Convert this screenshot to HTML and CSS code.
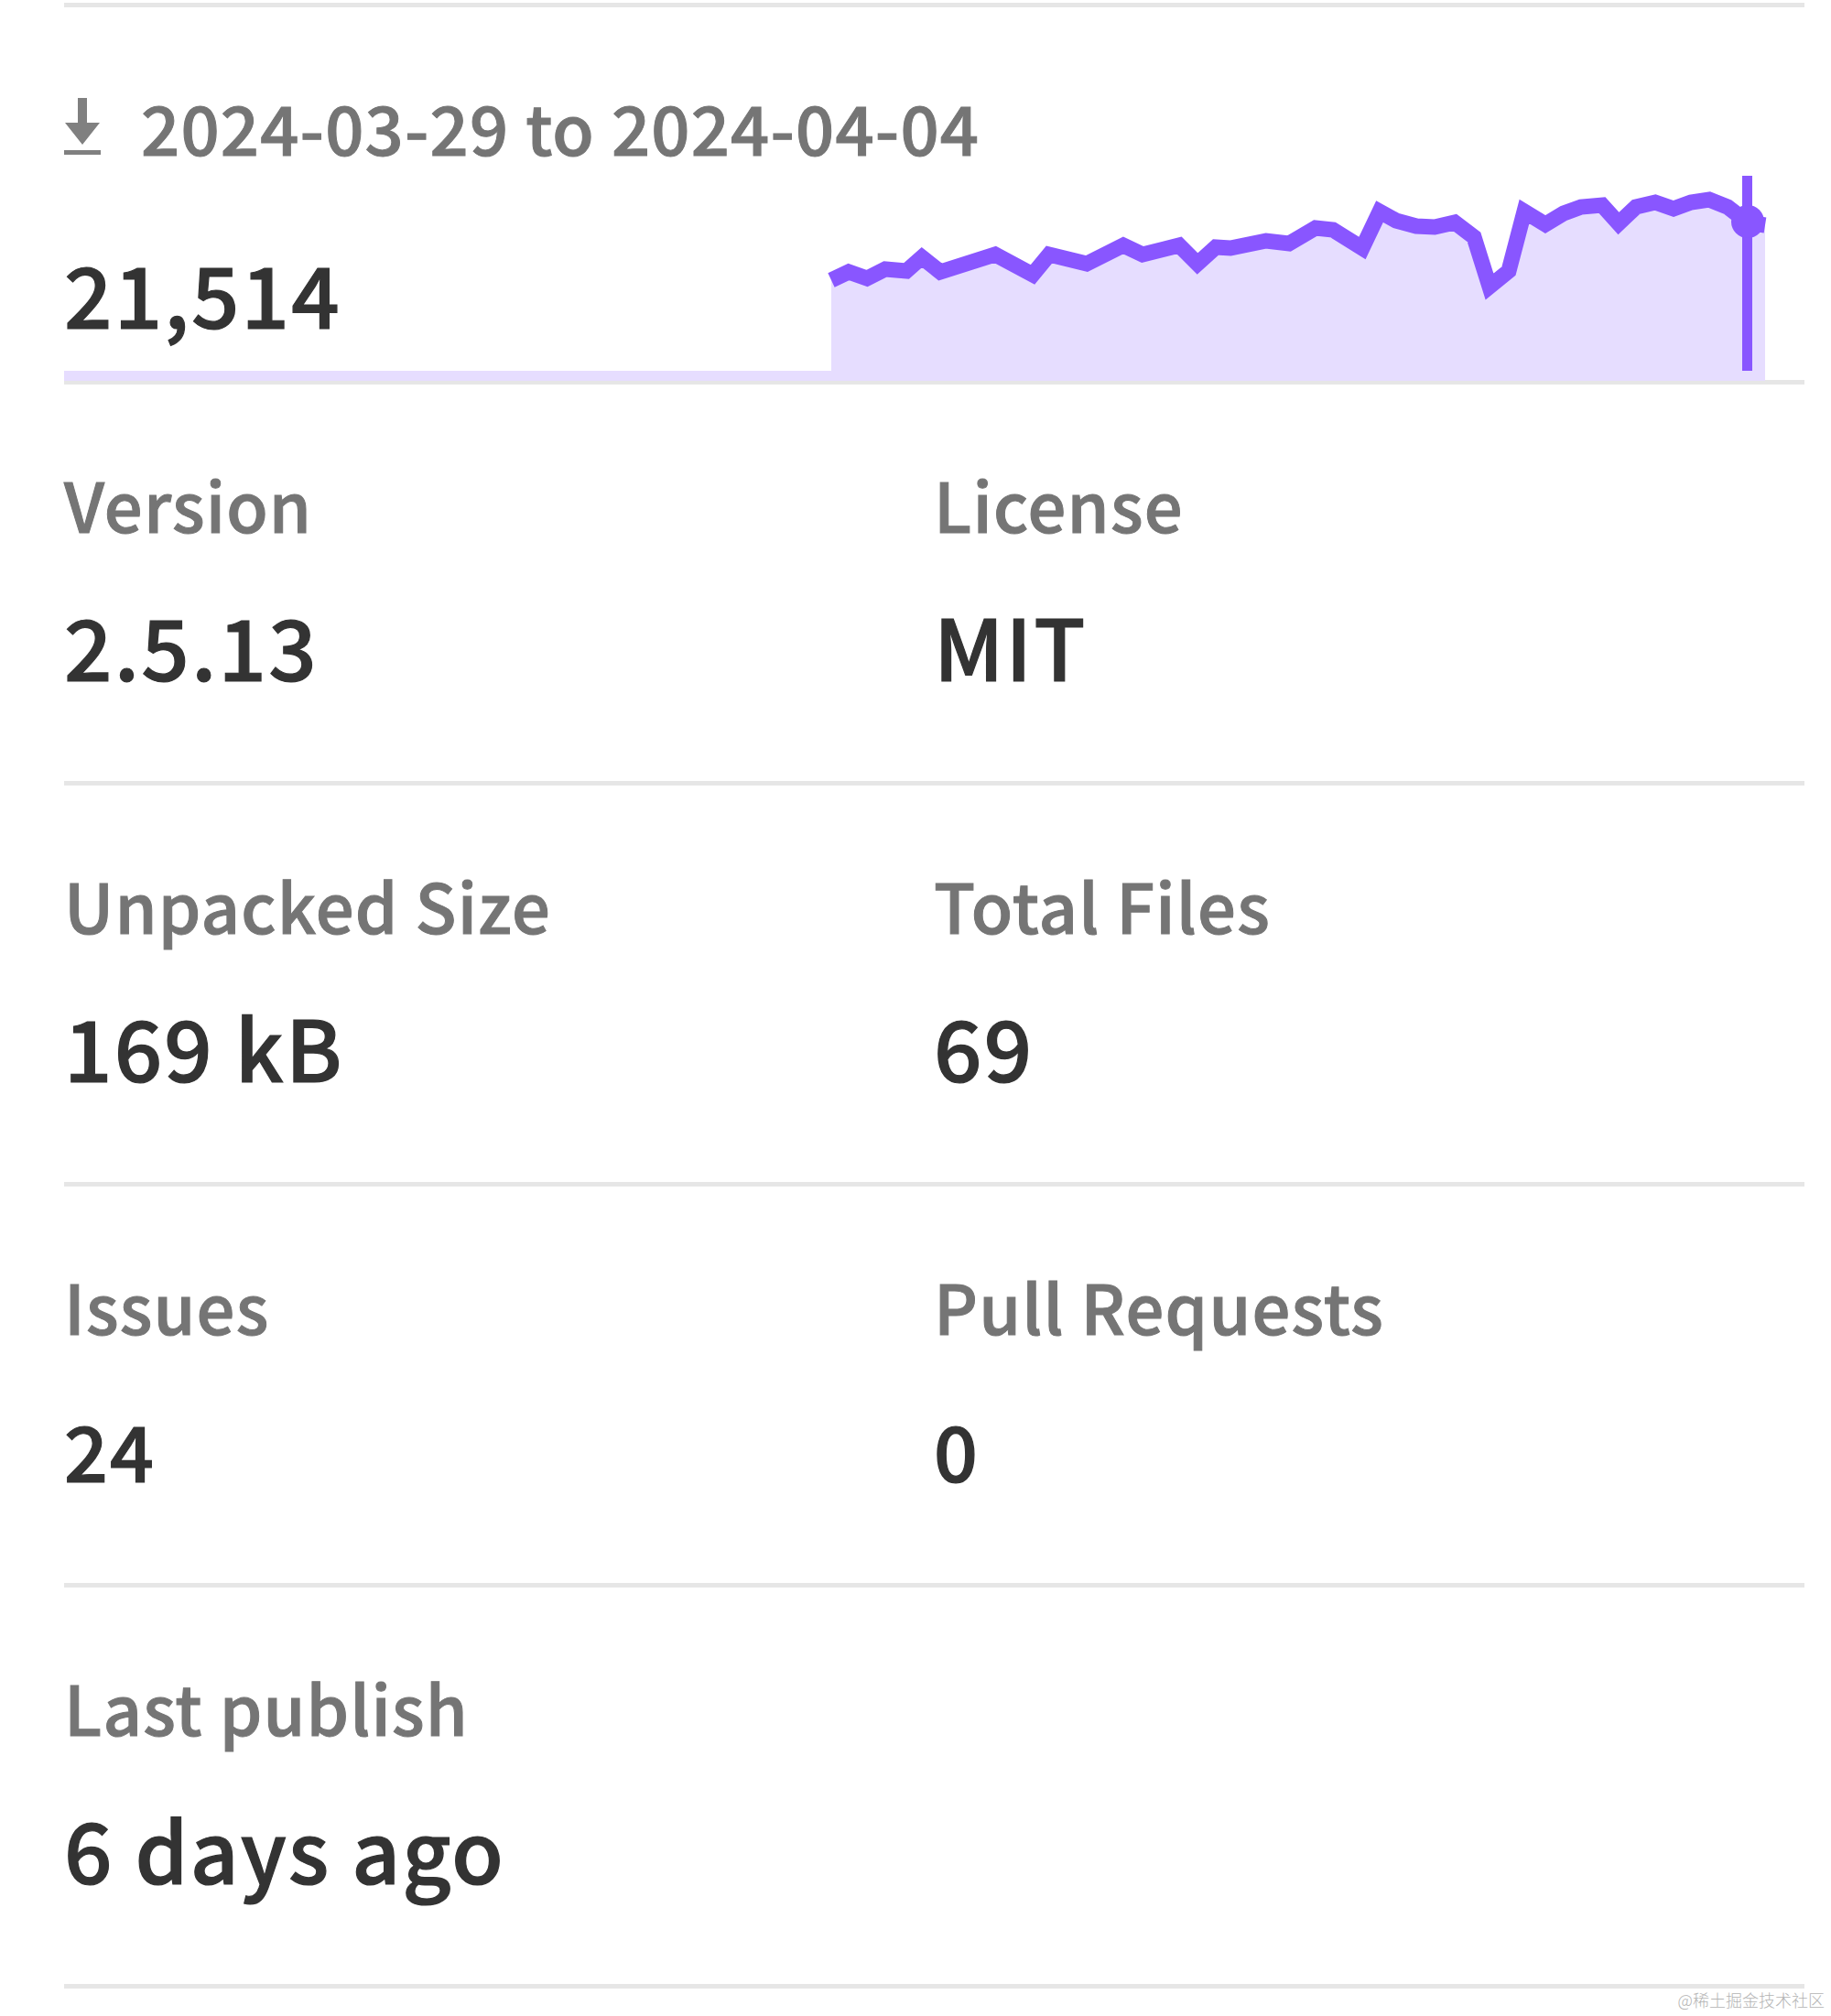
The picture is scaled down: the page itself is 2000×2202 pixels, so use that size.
FILE: index.html
```html
<!DOCTYPE html>
<html lang="en">
<head>
<meta charset="utf-8">
<title>Package stats</title>
<link rel="stylesheet" href="styles.css">
</head>
<body>
<main class="sidebar">
  <section class="downloads">
    <h3 class="label range">
      <svg class="dl-icon" viewBox="0 0 40 62" aria-hidden="true"><path d="M15 0h10v27h14L20 51 1 27h14z"/><path d="M0 57h40v5H0z"/></svg>
      <span>2024-03-29 to 2024-04-04</span>
    </h3>
    <div class="stack">
      <svg class="spark" viewBox="0 -10 1901 240" preserveAspectRatio="none" aria-hidden="true">
        <path class="area" d="M0 219H838V120L857 111 877 118 897 108 920 110 937 95 957 111 1017 92 1058 114 1076 92 1117 102 1157 82 1178 92 1218 82 1238 102 1258 84 1274 85 1313 77 1338 80 1367 63 1386 65 1418 85 1437 45 1455 55 1477 61 1497 62 1519 57 1540 73 1557 127 1578 110 1595 45 1618 59 1638 47 1657 40 1680 38 1698 58 1717 40 1738 35 1758 42 1777 35 1797 32 1817 40 1839 57 1858 60V239H0Z"/>
        <path class="line" d="M838 120L857 111 877 118 897 108 920 110 937 95 957 111 1017 92 1058 114 1076 92 1117 102 1157 82 1178 92 1218 82 1238 102 1258 84 1274 85 1313 77 1338 80 1367 63 1386 65 1418 85 1437 45 1455 55 1477 61 1497 62 1519 57 1540 73 1557 127 1578 110 1595 45 1618 59 1638 47 1657 40 1680 38 1698 58 1717 40 1738 35 1758 42 1777 35 1797 32 1817 40 1839 57 1858 60"/>
        <rect class="cursor" x="1833" y="6" width="11" height="213"/>
        <circle class="cursor" cx="1839" cy="56" r="18"/>
      </svg>
      <p class="value count">21,514</p>
    </div>
  </section>
  <section class="row">
    <div><h3 class="label">Version</h3><p class="value">2.5.13</p></div>
    <div><h3 class="label">License</h3><p class="value">MIT</p></div>
  </section>
  <section class="row">
    <div><h3 class="label">Unpacked Size</h3><p class="value">169 kB</p></div>
    <div><h3 class="label">Total Files</h3><p class="value">69</p></div>
  </section>
  <section class="row">
    <div><h3 class="label">Issues</h3><p class="value value-sm">24</p></div>
    <div><h3 class="label">Pull Requests</h3><p class="value value-sm">0</p></div>
  </section>
  <section class="row">
    <div><h3 class="label">Last publish</h3><p class="value">6 days ago</p></div>
  </section>
</main>
<div class="watermark">@稀土掘金技术社区</div>
</body>
</html>
```
FILE: styles.css
```css
* { box-sizing: border-box; }
html, body { margin: 0; background: #fff; }
body {
  position: relative;
  height: 2202px;
  overflow: hidden;
  font-family: "Noto Sans CJK SC", "Noto Sans", sans-serif;
}
.sidebar {
  padding: 3px 29px 0 70px;
  filter: blur(0.7px);
}
.downloads {
  border-top: 5px solid #e6e6e6;
  border-bottom: 5px solid #e6e6e6;
  height: 417px;
  padding-top: 88px;
}
.label {
  margin: 0;
  font-size: 74px;
  font-weight: 500;
  letter-spacing: 1.2px;
  -webkit-text-stroke: 1px #757575;
  line-height: 84px;
  color: #757575;
}
.range {
  display: flex;
  align-items: center;
  gap: 44px;
}
.dl-icon {
  width: 40px;
  height: 62px;
  fill: #808080;
  flex: none;
}
.stack {
  display: grid;
  margin-top: -4px;
  height: 240px;
}
.stack > * { grid-area: 1 / 1; }
.spark { width: 1901px; height: 240px; display: block; }
.area { fill: #e6ddff; }
.line { fill: none; stroke: #8956ff; stroke-width: 17; stroke-miterlimit: 8; }
.cursor { fill: #8956ff; }
.value {
  margin: 0;
  font-size: 92px;
  font-weight: 500;
  letter-spacing: 2.2px;
  -webkit-text-stroke: 1.2px #333;
  line-height: 110px;
  color: #333;
}
.count { align-self: end; margin-bottom: 42px; }
.row {
  display: grid;
  grid-template-columns: 950px 1fr;
  height: 438px;
  padding-top: 88px;
  border-bottom: 5px solid #e6e6e6;
}
.row .value { margin-top: 57px; }
.row .value-sm { margin-top: 60px; font-size: 84px; }
.watermark {
  position: absolute;
  right: 7px;
  bottom: 7px;
  font-size: 18px;
  line-height: 22px;
  font-weight: 300;
  color: #b4b4b4;
}
```
